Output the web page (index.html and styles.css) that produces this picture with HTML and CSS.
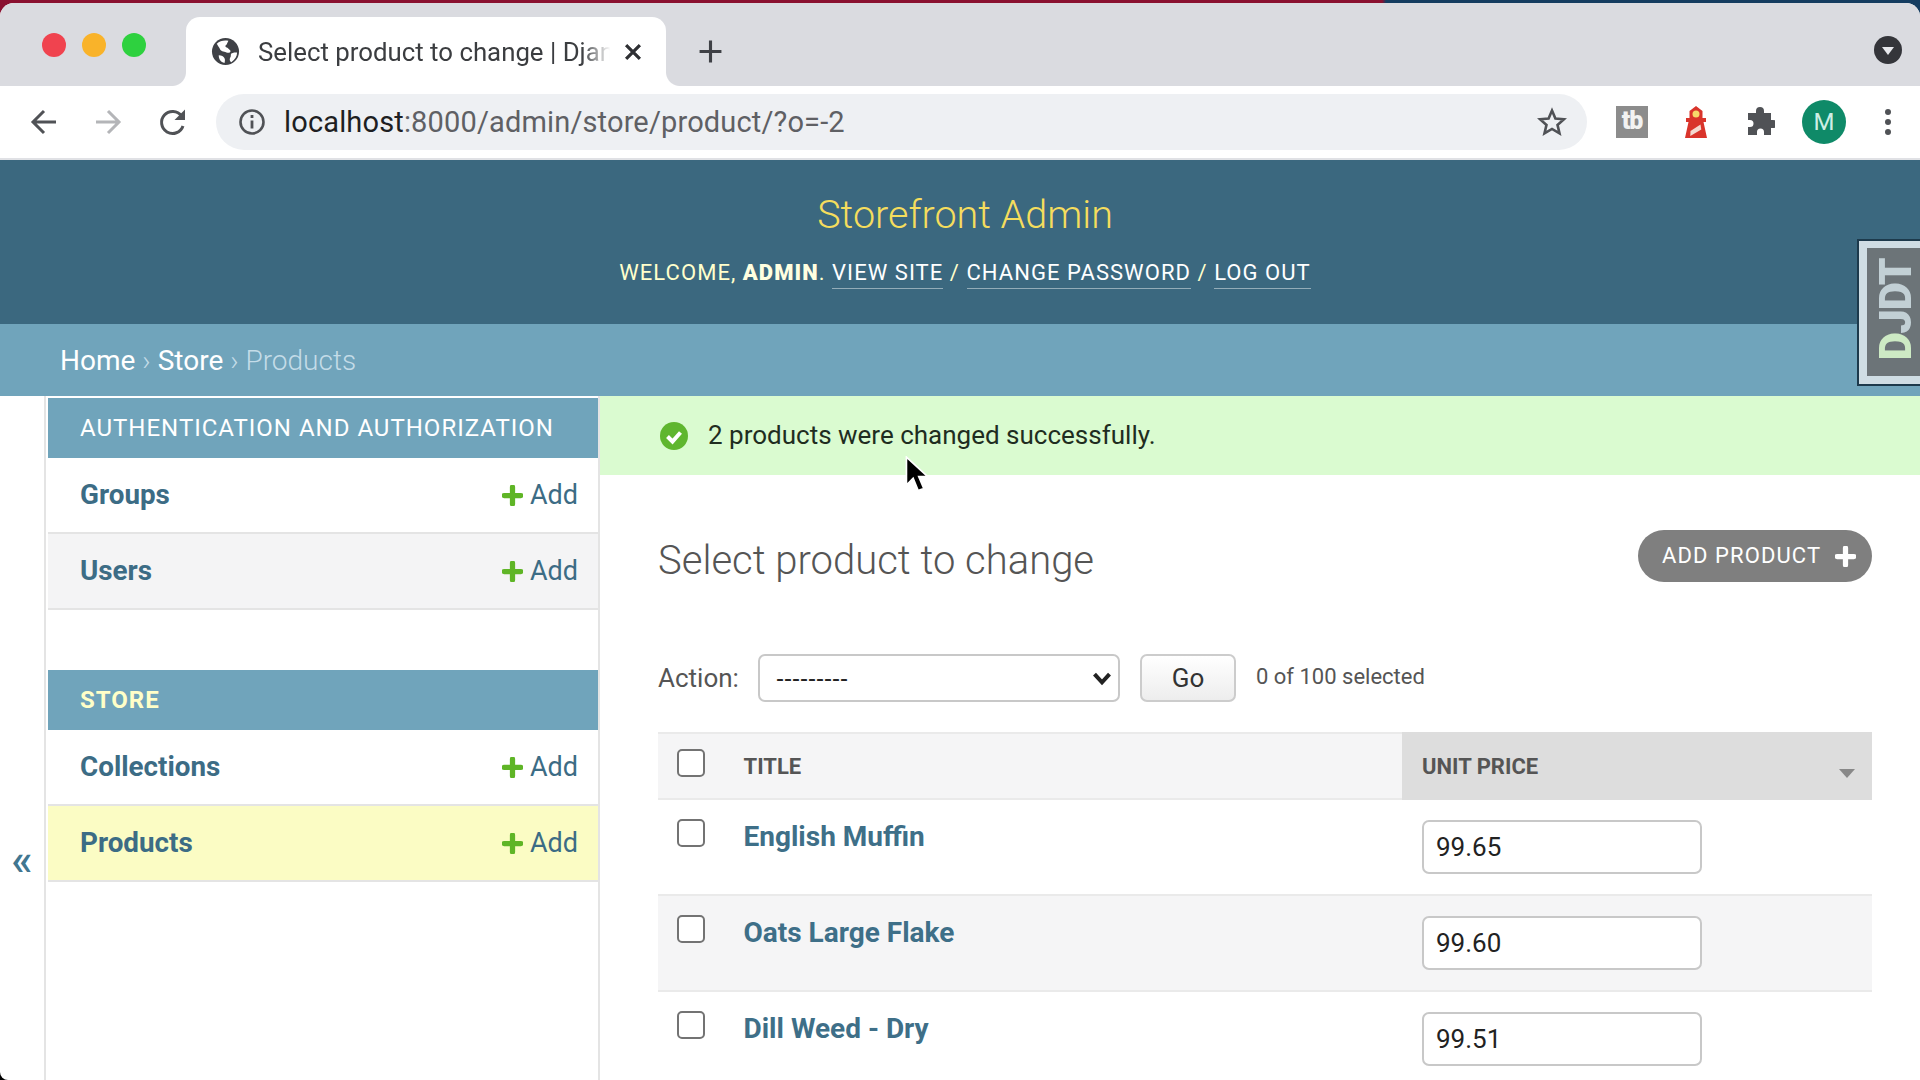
FILE: index.html
```html
<!DOCTYPE html>
<html lang="en">
<head>
<meta charset="utf-8">
<title>Select product to change | Django</title>
<link rel="stylesheet" href="styles.css">
</head>
<body>
<div class="window">
  <div class="tabstrip">
    <div class="lights"><span class="light red"></span><span class="light yellow"></span><span class="light green"></span></div>
    <div class="tab">
      <svg class="globe" viewBox="0 0 30 30"><circle cx="15" cy="15" r="14" fill="#3f4146"/><path d="M6 7c3-3 8-4 12-3l-2 4c-2 1-1 3 1 3l3 3c1 2-2 3-4 2-3-1-6-1-7-4-1-2-2-3-3-5zM21 17c2-1 4-1 6-1 0 4-2 7-6 10-2-1-2-3-1-5 1-1 0-3 1-4zM8 19c3 0 5 1 6 3 1 2 0 4 0 5-4-1-6-4-6-8z" fill="#fff"/></svg>
      <span class="tabtitle">Select product to change | Djan</span>
      <svg class="tabclose" viewBox="0 0 16 16"><path d="M2.500 2.500l11 11M13.500 2.500l-11 11" stroke="#2f3034" stroke-width="2.600" fill="none"/></svg>
    </div>
    <svg class="newtab" viewBox="0 0 24 24"><path d="M12 1.500v21M1.500 12h21" stroke="#3f4146" stroke-width="3" fill="none"/></svg>
    <svg class="tabsearch" viewBox="0 0 28 28"><circle cx="14" cy="14" r="14" fill="#34353a"/><path d="M8 11h12l-6 8z" fill="#e8e9ed"/></svg>
  </div>
  <div class="toolbar">
    <svg class="navicon" viewBox="0 0 30 30"><path d="M27 15H5M15 4L4 15l11 11" stroke="#505256" stroke-width="3" fill="none"/></svg>
    <svg class="navicon" viewBox="0 0 30 30"><path d="M3 15h22M15 4l11 11-11 11" stroke="#b4b5b8" stroke-width="3" fill="none"/></svg>
    <svg class="navicon" viewBox="0 0 30 30"><path d="M25 19a11 11 0 1 1-1.500-10" stroke="#505256" stroke-width="3" fill="none"/><path d="M27 2.500V13H16.500z" fill="#505256"/></svg>
    <div class="omnibox">
      <svg class="info" viewBox="0 0 28 28"><circle cx="14" cy="14" r="11.500" stroke="#505256" stroke-width="2.600" fill="none"/><path d="M14 12.500v8M14 7v3" stroke="#505256" stroke-width="2.800" fill="none"/></svg>
      <span class="url"><span class="host">localhost</span>:8000/admin/store/product/?o=-2</span>
      <svg class="star" viewBox="0 0 30 30"><path d="M15 3.500l3.400 8 8.600.7-6.500 5.700 2 8.400L15 21.900l-7.500 4.400 2-8.400L3 12.200l8.600-.7z" stroke="#505256" stroke-width="2.600" fill="none"/></svg>
    </div>
    <div class="extensions">
      <div class="tb">tb</div>
      <svg class="lighthouse" viewBox="0 0 22 32"><path d="M11 0l6.500 5v7h3.500v4h-2.500L22 32H0l3.500-16H1v-4h3.500V5z" fill="#d9342b"/><circle cx="11" cy="8" r="3.500" fill="#f7d96a"/><path d="M5.500 25l10-6.500.8 5-11 6.500z" fill="#f4d9d0"/></svg>
      <svg class="puzzle" viewBox="0 0 30 30"><path d="M11 4a4 4 0 0 1 8 0v2h7v7h2a4 4 0 0 1 0 8h-2v7h-7v-3a3.500 3.500 0 0 0-7 0v3H3v-8h2a3.500 3.500 0 0 0 0-7H3V6h8z" fill="#505256"/></svg>
      <div class="avatar">M</div>
      <svg class="kebab" viewBox="0 0 8 30"><circle cx="4" cy="5" r="3" fill="#505256"/><circle cx="4" cy="15" r="3" fill="#505256"/><circle cx="4" cy="25" r="3" fill="#505256"/></svg>
    </div>
  </div>
  <header class="siteheader">
    <div class="branding">Storefront Admin</div>
    <div class="usertools">WELCOME, <strong>ADMIN</strong>. <a>VIEW SITE</a> / <a>CHANGE PASSWORD</a> / <a>LOG OUT</a></div>
  </header>
  <div class="breadcrumbs"><a>Home</a> › <a>Store</a> › Products</div>
  <div class="djdt"><div class="djdt-inner"><span class="djdt-label"><span class="djdt-d">D</span>JDT</span></div></div>
  <div class="main">
    <div class="collapse">«</div>
    <nav class="sidebar">
      <div class="module">
        <div class="caption">AUTHENTICATION AND AUTHORIZATION</div>
        <div class="navrow"><a class="model">Groups</a><a class="addlink"><svg class="plus" viewBox="0 0 20 20"><path d="M10 2v16M2 10h16" stroke="#5fb526" stroke-width="5" stroke-linecap="round" fill="none"/></svg>Add</a></div>
        <div class="navrow alt"><a class="model">Users</a><a class="addlink"><svg class="plus" viewBox="0 0 20 20"><path d="M10 2v16M2 10h16" stroke="#5fb526" stroke-width="5" stroke-linecap="round" fill="none"/></svg>Add</a></div>
      </div>
      <div class="module">
        <div class="caption current">STORE</div>
        <div class="navrow"><a class="model">Collections</a><a class="addlink"><svg class="plus" viewBox="0 0 20 20"><path d="M10 2v16M2 10h16" stroke="#5fb526" stroke-width="5" stroke-linecap="round" fill="none"/></svg>Add</a></div>
        <div class="navrow selected"><a class="model">Products</a><a class="addlink"><svg class="plus" viewBox="0 0 20 20"><path d="M10 2v16M2 10h16" stroke="#5fb526" stroke-width="5" stroke-linecap="round" fill="none"/></svg>Add</a></div>
      </div>
    </nav>
    <section class="content">
      <div class="message">
        <svg class="check" viewBox="0 0 28 28"><circle cx="14" cy="14" r="14" fill="#5fb62f"/><path d="M7.500 14.500l5 5 8-9" stroke="#fff" stroke-width="4" fill="none"/></svg>
        <span>2 products were changed successfully.</span>
        <svg class="cursor" viewBox="0 0 22 34"><path d="M2 1v25l6-6 4.500 11 5-2-4.500-10.500h8z" fill="#000" stroke="#fff" stroke-width="1.500"/></svg>
      </div>
      <div class="inner">
        <div class="titlerow">
          <h1>Select product to change</h1>
          <a class="addbtn">ADD PRODUCT<svg class="addplus" viewBox="0 0 20 20"><path d="M10 2v16M2 10h16" stroke="#fff" stroke-width="5" stroke-linecap="round" fill="none"/></svg></a>
        </div>
        <div class="actions">
          <label class="actlabel">Action:</label>
          <div class="fakeselect"><span>---------</span><svg class="chev" viewBox="0 0 16 12"><path d="M2 2.500l6 6.500 6-6.500" stroke="#222" stroke-width="3.200" fill="none"/></svg></div>
          <button class="go">Go</button>
          <span class="counter">0 of 100 selected</span>
        </div>
        <div class="table">
          <div class="thead">
            <div class="cell-check"><span class="box"></span></div>
            <div class="th-title">TITLE</div>
            <div class="th-price">UNIT PRICE<span class="sorttri"></span></div>
          </div>
          <div class="tr">
            <div class="cell-check"><span class="box"></span></div>
            <a class="prodname">English Muffin</a>
            <div class="pricecell"><div class="priceinput">99.65</div></div>
          </div>
          <div class="tr alt">
            <div class="cell-check"><span class="box"></span></div>
            <a class="prodname">Oats Large Flake</a>
            <div class="pricecell"><div class="priceinput">99.60</div></div>
          </div>
          <div class="tr">
            <div class="cell-check"><span class="box"></span></div>
            <a class="prodname">Dill Weed - Dry</a>
            <div class="pricecell"><div class="priceinput">99.51</div></div>
          </div>
        </div>
      </div>
    </section>
  </div>
</div>
</body>
</html>
```
FILE: styles.css
```css
* { box-sizing: border-box; }
html, body { margin: 0; height: 100%; overflow: hidden; }
body { font-family: Roboto, "Liberation Sans", sans-serif; color: #333; background-color: #000; background-image: linear-gradient(90deg, #8a1030 1382px, #143c60 1386px); background-size: 100% 30px; background-repeat: no-repeat; }
.window { position: relative; width: 1920px; height: 1077px; margin-top: 3px; background: #fff; border-radius: 14px 14px 0 8px; overflow: hidden; }
.tabstrip { height: 83px; background: #dadbe0; display: flex; align-items: flex-end; position: relative; }
.lights { display: flex; gap: 16px; width: 186px; padding: 0 0 29px 42px; align-self: flex-end; }
.light { width: 24px; height: 24px; border-radius: 50%; }
.red { background: #f0434f; }
.yellow { background: #f9b32a; }
.green { background: #2ed13f; }
.tab { position: relative; width: 480px; height: 69px; background: #fff; border-radius: 14px 14px 0 0; display: flex; align-items: center; padding: 0 23px 0 25px; }
.tab::before, .tab::after { content: ""; position: absolute; bottom: 0; width: 14px; height: 14px; }
.tab::before { left: -14px; background: radial-gradient(circle at 0 0, #dadbe0 13.500px, #fff 14.500px); }
.tab::after { right: -14px; background: radial-gradient(circle at 100% 0, #dadbe0 13.500px, #fff 14.500px); }
.globe { width: 29px; height: 29px; flex: none; margin-right: 18px; }
.tabtitle { font-size: 25.800px; color: #3b3d40; white-space: nowrap; flex: none; -webkit-mask-image: linear-gradient(90deg, #000 91%, transparent 99%); mask-image: linear-gradient(90deg, #000 91%, transparent 99%); }
.tabclose { width: 20px; height: 20px; margin-left: auto; flex: none; }
.newtab { width: 25px; height: 25px; margin: 0 0 22px 32px; flex: none; }
.tabsearch { width: 28px; height: 28px; margin: 0 18px 22px auto; flex: none; }
.toolbar { height: 74px; background: #fff; border-bottom: 2px solid #e0e1e5; display: flex; align-items: center; padding: 0 0 0 29px; }
.navicon { width: 30px; height: 30px; margin-right: 35px; flex: none; }
.navicon:first-child { margin-right: 34px; }
.navicon:nth-child(3) { margin-right: 28px; }
.omnibox { width: 1371px; height: 56px; border-radius: 28px; background: #eef0f3; display: flex; align-items: center; padding: 0 20px 0 22px; flex: none; }
.info { width: 28px; height: 28px; flex: none; margin-right: 18px; }
.url { font-size: 29px; color: #5f6064; white-space: nowrap; letter-spacing: .15px; }
.host { color: #1e1f22; }
.star { width: 30px; height: 30px; margin-left: auto; flex: none; }
.extensions { display: grid; grid-template-columns: repeat(5, 64px); align-items: center; justify-items: center; margin-left: 13px; flex: none; }
.tb { width: 32px; height: 32px; background: #8c8c8c; color: #f2f2f2; font-weight: 900; font-size: 25px; line-height: 30px; text-align: center; letter-spacing: -1px; }
.lighthouse { width: 22px; height: 32px; }
.puzzle { width: 30px; height: 30px; }
.avatar { width: 44px; height: 44px; border-radius: 50%; background: #0f8a68; color: #cdeee4; font-size: 24px; line-height: 44px; text-align: center; }
.kebab { width: 8px; height: 30px; }
.siteheader { height: 164px; background: #3b687f; display: flex; flex-direction: column; align-items: center; padding: 30px 0 0 10px; }
.branding { font-size: 39.500px; font-weight: 300; color: #f5dd5d; line-height: 50px; }
.usertools { font-size: 22px; letter-spacing: 1.050px; color: #ffc; margin-top: 17px; font-weight: 400; line-height: 32px; }
.usertools strong { font-weight: 900; color: #ffffe0; }
.usertools a { border-bottom: 1px solid rgba(255,255,255,.45); color: #fff; font-weight: 400; padding-bottom: 3px; }
.breadcrumbs { height: 72px; background: #70a4bb; padding-left: 60px; display: flex; align-items: center; gap: .25em; color: #c4dce8; font-size: 28px; font-weight: 300; }
.breadcrumbs a { color: #fff; font-weight: 400; }
.djdt { position: absolute; top: 236px; right: 0; width: 63px; height: 147px; border: 2px solid #1d3a4c; border-right: 0; background: #cfdde4; padding: 7px 0 8px 8px; }
.djdt-inner { display: flex; align-items: center; justify-content: center; height: 100%; background: #6c7478; padding: 0 1px 4px 6px; }
.djdt-label { display: block; color: #c2d0d5; font-weight: 900; font-size: 44px; line-height: 1; letter-spacing: -1.500px; white-space: nowrap; writing-mode: vertical-rl; transform: rotate(180deg); }
.djdt-d { color: #cdeac4; }
.main { display: flex; height: 684px; }
.collapse { width: 46px; flex: none; border-right: 2px solid #e4e4e4; color: #417690; font-size: 44px; font-weight: 500; line-height: 1; display: flex; align-items: flex-start; justify-content: center; padding: 442px 0 0 0; }
.sidebar { width: 554px; flex: none; padding: 2px 0 0 2px; border-right: 2px solid #e4e4e4; }
.module { margin-bottom: 60px; }
.caption { height: 60px; background: #70a4bb; color: #fff; font-size: 24px; letter-spacing: 1px; padding: 0 0 0 32px; display: flex; align-items: center; }
.caption.current { color: #ffffc8; font-weight: 700; }
.navrow { height: 76px; border-bottom: 2px solid #e4e4e4; display: flex; align-items: center; justify-content: space-between; padding: 0 20px 0 32px; }
.navrow.alt { background: #f4f4f5; }
.navrow.selected { background: #fbfcc4; }
.model { color: #3c6c85; font-weight: 700; font-size: 27.800px; margin-bottom: 2px; }
.addlink { color: #3c6c85; font-size: 27px; font-weight: 400; display: flex; align-items: center; gap: 7px; }
.plus { width: 21px; height: 21px; flex: none; }
.content { flex: 1; min-width: 0; }
.message { height: 79px; background: #dafbd0; display: flex; align-items: center; padding: 0 0 2px 60px; font-size: 26px; color: #1f2d1f; gap: 20px; position: relative; }
.check { width: 28px; height: 28px; flex: none; margin-top: 2px; }
.cursor { position: absolute; left: 304px; top: 60px; width: 25px; height: 38px; }
.inner { padding: 55px 48px 0 58px; }
.titlerow { display: flex; justify-content: space-between; align-items: center; height: 52px; }
h1 { margin: 9px 0 0; font-size: 40px; font-weight: 300; color: #555; }
.addbtn { width: 234px; height: 52px; border-radius: 26px; background: #7f7f7f; color: #fff; font-size: 22px; letter-spacing: 1.100px; display: flex; align-items: center; padding: 0 0 2px 24px; gap: 14px; }
.addplus { width: 21px; height: 21px; flex: none; margin-top: 2px; }
.actions { display: flex; align-items: center; height: 48px; margin-top: 72px; color: #555; }
.actlabel { font-size: 26px; width: 100px; flex: none; }
.fakeselect { width: 362px; height: 48px; border: 2px solid #c8c8c8; border-radius: 7px; background: #fff; display: flex; align-items: center; justify-content: space-between; padding: 0 6px 0 16px; font-size: 24px; color: #222; font-family: "Liberation Sans", sans-serif; flex: none; }
.chev { width: 20px; height: 15px; flex: none; }
.go { width: 96px; height: 48px; margin-left: 20px; border: 2px solid #ccc; border-radius: 7px; background: linear-gradient(#fff, #ededed); font: 400 26px Roboto, sans-serif; color: #333; flex: none; }
.counter { font-size: 22px; margin-left: 20px; color: #555; position: relative; top: -2px; }
.table { margin-top: 30px; }
.thead { display: flex; height: 68px; background: #f5f5f6; border-top: 2px solid #eaeaea; border-bottom: 2px solid #eaeaea; align-items: stretch; }
.cell-check { width: 85.500px; flex: none; padding: 15px 0 0 19px; }
.box { display: block; width: 28px; height: 28px; border: 2px solid #737373; border-radius: 5px; background: #fff; }
.th-title { width: 658.500px; flex: none; font-size: 22px; font-weight: 700; color: #555; display: flex; align-items: center; }
.th-price { flex: 1; background: #ddd; font-size: 22px; font-weight: 700; color: #555; display: flex; align-items: center; padding-left: 20px; position: relative; margin: -2px 0; }
.sorttri { position: absolute; right: 17px; top: 37px; border: 8px solid transparent; border-top: 9px solid #888; border-bottom: 0; }
.tr { display: flex; height: 96px; border-bottom: 2px solid #eaeaea; }
.tr.alt { background: #f5f5f6; }
.tr .cell-check { padding-top: 19px; }
.prodname { width: 658.500px; flex: none; color: #3e6f88; font-weight: 700; font-size: 28px; padding-top: 20px; }
.pricecell { flex: 1; padding: 20px 0 0 20px; }
.priceinput { width: 280px; height: 54px; border: 2px solid #c8c8c8; border-radius: 7px; background: #fff; font-size: 26px; color: #222; display: flex; align-items: center; padding-left: 12px; }
```
